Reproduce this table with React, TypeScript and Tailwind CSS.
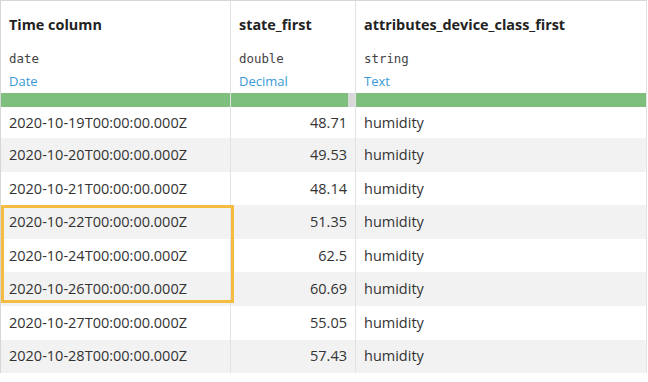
import React from "react";

const rows = [
  ["2020-10-19T00:00:00.000Z", "48.71", "humidity"],
  ["2020-10-20T00:00:00.000Z", "49.53", "humidity"],
  ["2020-10-21T00:00:00.000Z", "48.14", "humidity"],
  ["2020-10-22T00:00:00.000Z", "51.35", "humidity"],
  ["2020-10-24T00:00:00.000Z", "62.5", "humidity"],
  ["2020-10-26T00:00:00.000Z", "60.69", "humidity"],
  ["2020-10-27T00:00:00.000Z", "55.05", "humidity"],
  ["2020-10-28T00:00:00.000Z", "57.43", "humidity"],
];

const sans = { fontFamily: '"Open Sans", "Noto Sans", sans-serif' };

function HeaderCell({
  title,
  type,
  meaning,
  width,
  handle,
}: {
  title: string;
  type?: string;
  meaning?: string;
  width: string;
  handle?: boolean;
}) {
  return (
    <div className={`${width} shrink-0 border-r border-[#e2e2e2] flex flex-col`}>
      <div className="h-[47px] flex items-center px-2 text-[14.4px] font-bold text-[#222]">{title}</div>
      <div className="h-[22px] flex items-center px-2 text-[12.4px] text-[#444] font-['DejaVu_Sans_Mono',monospace]">
        {type ?? "\u00a0"}
      </div>
      <div className="h-[23px] flex items-center px-2 text-[13px] text-[#3b99d8]">{meaning ?? "\u00a0"}</div>
      <div className="h-[14px] flex">
        <div className="flex-1 bg-[#7ebf7d]" />
        {handle && <div className="w-[7px] bg-[#d9d9d9]" />}
      </div>
    </div>
  );
}

export default function App() {
  return (
    <div className="w-[648px] h-[382px] overflow-hidden bg-white relative" style={sans}>
      <div className="border-t border-l border-[#d6d6d6] w-[647px]">
        <div className="flex">
          <HeaderCell title="Time column" type="date" meaning="Date" width="w-[230px]" />
          <HeaderCell title="state_first" type="double" meaning="Decimal" width="w-[125px]" handle />
          <HeaderCell title="attributes_device_class_first" type="string" meaning="Text" width="w-[291px]" />
        </div>
        {rows.map((r, i) => (
          <div
            key={i}
            className={`flex text-[14.5px] text-[#333] ${i === 0 ? "h-[31px]" : "h-[33.6px]"} ${
              i % 2 === 1 ? "bg-[#f2f2f2]" : "bg-white"
            }`}
          >
            <div className="w-[230px] shrink-0 border-r border-[#e2e2e2] flex items-center px-2">{r[0]}</div>
            <div className="w-[125px] shrink-0 border-r border-[#e2e2e2] flex items-center justify-end pr-2">
              {r[1]}
            </div>
            <div className="w-[291px] shrink-0 border-r border-[#e2e2e2] flex items-center px-2">{r[2]}</div>
          </div>
        ))}
      </div>
      <div className="absolute left-[1px] top-[205px] w-[233px] h-[98px] border-[3px] border-[#f4bd42] pointer-events-none" />
    </div>
  );
}
